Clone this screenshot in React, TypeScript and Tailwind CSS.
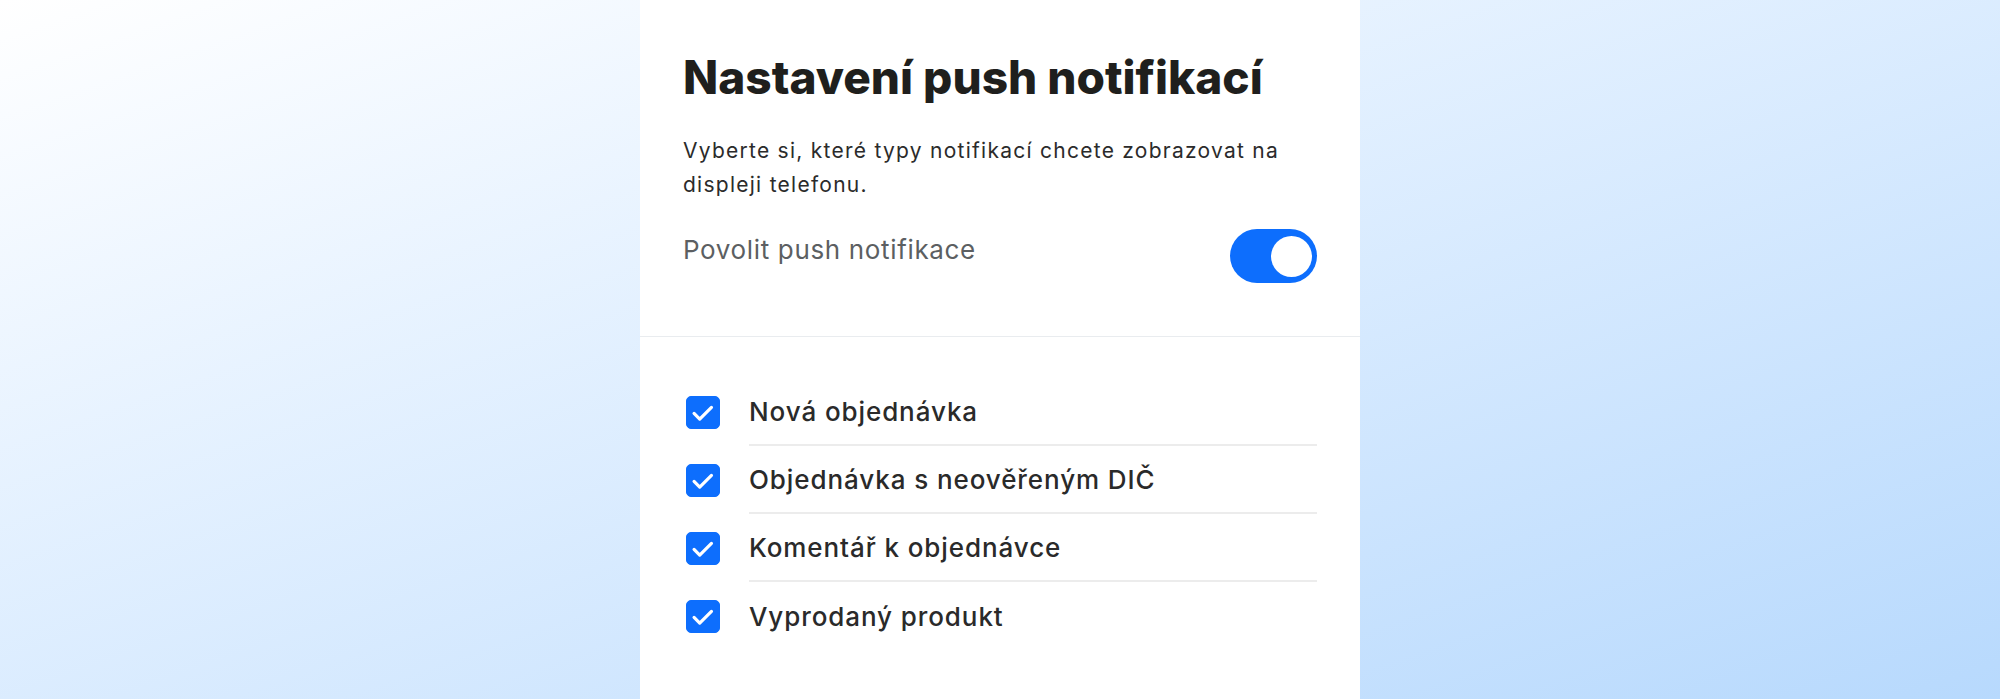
import { useState } from "react";

const items = [
  "Nová objednávka",
  "Objednávka s neověřeným DIČ",
  "Komentář k objednávce",
  "Vyprodaný produkt",
];

function Check({ checked, onClick }: { checked: boolean; onClick: () => void }) {
  return (
    <button
      onClick={onClick}
      className={`ml-[3px] h-[33px] w-[34px] shrink-0 rounded-[5px] border ${
        checked ? "border-[#0d6efd] bg-[#0d6efd]" : "border-[#ced4da] bg-white"
      }`}
    >
      {checked && (
        <svg viewBox="0 0 34 33" className="h-full w-full">
          <path
            d="M7.5 17.5 L13.5 23.5 L26 11"
            fill="none"
            stroke="#fff"
            strokeWidth="3.4"
            strokeLinecap="round"
            strokeLinejoin="round"
          />
        </svg>
      )}
    </button>
  );
}

export default function App() {
  const [enabled, setEnabled] = useState(true);
  const [checked, setChecked] = useState<boolean[]>([true, true, true, true]);

  const toggle = (index: number) => {
    const next = [...checked];
    next[index] = !next[index];
    setChecked(next);
  };

  return (
    <main className="flex min-h-screen justify-center bg-gradient-to-br from-white to-[#b7d9fd] font-['Inter',sans-serif]">
      <div className="w-[720px] bg-white">
        <div className="border-b border-[#e9ecef] px-[43px] pb-[53px] pt-[50px]">
          <h1 className="text-[46px] font-extrabold leading-[54px] text-[#1f1f1d]">
            Nastavení push notifikací
          </h1>
          <p className="mt-[30px] text-[21px] leading-[34px] tracking-[0.06em] text-[#2b2b2b]">
            Vyberte si, které typy notifikací chcete zobrazovat na displeji telefonu.
          </p>
          <div className="mt-[27px] flex items-start justify-between">
            <span className="pt-[3px] text-[26px] leading-[36px] tracking-[0.025em] text-[#5c5f62]">
              Povolit push notifikace
            </span>
            <button
              onClick={() => setEnabled(!enabled)}
              className={`flex h-[54px] w-[87px] items-center rounded-full px-[5px] ${
                enabled ? "justify-end bg-[#0d6efd]" : "justify-start bg-[#dee2e6]"
              }`}
            >
              <span className="h-[41px] w-[41px] rounded-full bg-white" />
            </button>
          </div>
        </div>
        <div className="px-[43px] pb-[48px] pt-[41px]">
          {items.map((item, index) => (
            <div className="flex items-center gap-[29px]" key={index}>
              <Check checked={checked[index]} onClick={() => toggle(index)} />
              <div
                className={`flex h-[68px] flex-1 items-center text-[26px] font-medium tracking-[0.035em] text-[#2a2a2a] ${
                  index < items.length - 1 ? "border-b-2 border-[#ececec]" : ""
                }`}
              >
                {item}
              </div>
            </div>
          ))}
        </div>
      </div>
    </main>
  );
}
